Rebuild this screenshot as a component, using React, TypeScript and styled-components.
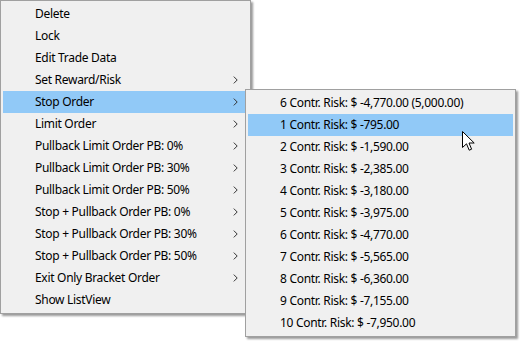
import styled, { createGlobalStyle } from "styled-components";

const GlobalStyle = createGlobalStyle`
  html, body {
    margin: 0;
    padding: 0;
    background: #ffffff;
  }
  body {
    font-family: "Noto Sans", "Liberation Sans", sans-serif;
    font-size: 12px;
    letter-spacing: -0.3px;
    color: #000;
  }
`;

const Canvas = styled.div`
  display: flex;
  align-items: flex-start;
  width: 522px;
  height: 341px;
  overflow: hidden;
  background: #fff;
`;

const Menu = styled.div<{ $width: number; $top?: number; $overlap?: number }>`
  position: relative;
  flex: none;
  width: ${(p) => p.$width}px;
  margin-top: ${(p) => p.$top ?? 0}px;
  margin-left: ${(p) => -(p.$overlap ?? 0)}px;
  box-sizing: border-box;
  padding: 2px;
  background: #f0f0f0;
  border: 1px solid #a0a0a0;
  box-shadow: 2px 2px 2px rgba(0, 0, 0, 0.4);
  display: flex;
  flex-direction: column;
`;

const Item = styled.div<{ $active?: boolean }>`
  display: flex;
  align-items: center;
  height: 22px;
  padding-left: 32px;
  padding-right: 8px;
  background: ${(p) => (p.$active ? "#91c9f7" : "transparent")};
  white-space: nowrap;
`;

const Label = styled.span`
  flex: 1;
  line-height: 22px;
`;

const Arrow = styled.svg`
  flex: none;
  width: 5px;
  height: 8px;
  margin-right: 2px;
`;

const Cursor = styled.svg`
  position: absolute;
  left: 216px;
  top: 41px;
  width: 14px;
  height: 22px;
`;

const mainItems: { label: string; sub?: boolean }[] = [
  { label: "Delete" },
  { label: "Lock" },
  { label: "Edit Trade Data" },
  { label: "Set Reward/Risk", sub: true },
  { label: "Stop Order", sub: true },
  { label: "Limit Order", sub: true },
  { label: "Pullback Limit Order PB: 0%", sub: true },
  { label: "Pullback Limit Order PB: 30%", sub: true },
  { label: "Pullback Limit Order PB: 50%", sub: true },
  { label: "Stop + Pullback Order PB: 0%", sub: true },
  { label: "Stop + Pullback Order PB: 30%", sub: true },
  { label: "Stop + Pullback Order PB: 50%", sub: true },
  { label: "Exit Only Bracket Order", sub: true },
  { label: "Show ListView" },
];

const riskItems = [
  "6 Contr. Risk: $ -4,770.00 (5,000.00)",
  "1 Contr. Risk: $ -795.00",
  "2 Contr. Risk: $ -1,590.00",
  "3 Contr. Risk: $ -2,385.00",
  "4 Contr. Risk: $ -3,180.00",
  "5 Contr. Risk: $ -3,975.00",
  "6 Contr. Risk: $ -4,770.00",
  "7 Contr. Risk: $ -5,565.00",
  "8 Contr. Risk: $ -6,360.00",
  "9 Contr. Risk: $ -7,155.00",
  "10 Contr. Risk: $ -7,950.00",
];

const Chevron = () => (
  <Arrow viewBox="0 0 5 8">
    <path d="M0.8 0.6 L4.2 4 L0.8 7.4" fill="none" stroke="#333" strokeWidth="1" />
  </Arrow>
);

const App = () => {
  return (
    <>
      <GlobalStyle />
      <Canvas>
        <Menu $width={251}>
          {mainItems.map((it) => (
            <Item key={it.label} $active={it.label === "Stop Order"}>
              <Label>{it.label}</Label>
              {it.sub && <Chevron />}
            </Item>
          ))}
        </Menu>
        <Menu $width={271} $top={89} $overlap={6}>
          {riskItems.map((r, i) => (
            <Item key={i} $active={i === 1}>
              <Label>{r}</Label>
            </Item>
          ))}
          <Cursor viewBox="0 0 14 22">
            <path
              d="M0.5 0.5 L0.5 16.5 L4.5 12.8 L7.2 19.2 L9.6 18.2 L7 12 L12.2 12 Z"
              fill="#fff"
              stroke="#000"
              strokeWidth="1"
              strokeLinejoin="miter"
            />
          </Cursor>
        </Menu>
      </Canvas>
    </>
  );
};

export default App;
